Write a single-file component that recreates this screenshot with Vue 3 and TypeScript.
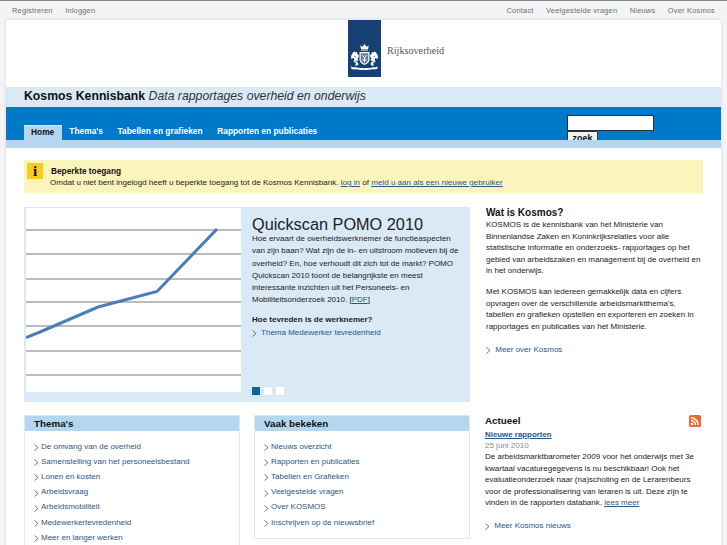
<script setup lang="ts">
const topLeft: string[] = ["Registreren", "Inloggen"];
const topRight: string[] = ["Contact", "Veelgestelde vragen", "Nieuws", "Over Kosmos"];
const tabs: string[] = ["Thema's", "Tabellen en grafieken", "Rapporten en publicaties"];
const themas: string[] = [
  "De omvang van de overheid",
  "Samenstelling van het personeelsbestand",
  "Lonen en kosten",
  "Arbeidsvraag",
  "Arbeidsmobiliteit",
  "Medewerkertevredenheid",
  "Meer en langer werken",
];
const vaak: string[] = [
  "Nieuws overzicht",
  "Rapporten en publicaties",
  "Tabellen en Grafieken",
  "Veelgestelde vragen",
  "Over KOSMOS",
  "Inschrijven op de nieuwsbrief",
];
const gridLines: number[] = [22, 46, 71, 94, 118, 143, 167];
</script>

<template>
  <div class="page">
    <div class="topbar">
      <div class="topbar__group">
        <a v-for="l in topLeft" :key="l">{{ l }}</a>
      </div>
      <div class="topbar__group">
        <a v-for="l in topRight" :key="l">{{ l }}</a>
      </div>
    </div>

    <div class="sheet">
      <div class="brand">
        <div class="brand__logo">
          <svg width="33" height="57" viewBox="0 0 33 57">
            <rect width="33" height="57" fill="#154273" />
            <g fill="#fff">
              <!-- kroon -->
              <path d="M13 29l-.8-3.500 2.300 1.200 2-2.700 2 2.700 2.300-1.200-.8 3.500z" />
              <rect x="13" y="29.600" width="7" height="1" />
              <!-- leeuwen -->
              <path d="M3 36l2-3.500 1.500-1 1 1 1.500-.5.500 2 1.500 1.500-.5 2-1 .5.800 2-1.300 1.500 1.500 2.500-1 1.500H7l1-2-2.500-2 1-2-1-1.500L5 38l-1.500 1.200z" />
              <path d="M30 36l-2-3.500-1.500-1-1 1-1.500-.5-.5 2L22 35.500l.5 2 1 .5-.8 2 1.300 1.500-1.500 2.500 1 1.500H26l-1-2 2.500-2-1-2 1-1.500L28 38l1.500 1.200z" />
              <!-- schild -->
              <path d="M11.500 32h10v7.500c0 2.800-2.500 4.500-5 5.500-2.500-1-5-2.700-5-5.500z" />
              <!-- lint -->
              <path d="M3 46.500c2 .8 3.500 1 5 .8 5 1.200 12 1.200 17 0 1.500.2 3 0 5-.8l-1 2.500c-1.500.5-3 .5-4.500.3-4.500 1-12 1-16.500 0-1.500.2-3 .2-4.500-.3z" />
            </g>
            <path d="M12.700 33.200h7.600v6.300c0 2-1.800 3.300-3.800 4.200-2-.9-3.800-2.200-3.800-4.200z" fill="#5f7fa3" />
            <path d="M14.500 35l2 3 2-3M16.500 38v4M14.500 40h4" stroke="#fff" stroke-width="1" fill="none" />
            <path d="M6 36l1.500 1M27 36l-1.500 1M7 42l2-1M26 42l-2-1" stroke="#154273" stroke-width=".7" fill="none" />
          </svg>
        </div>
        <span class="brand__name">Rijksoverheid</span>
      </div>

      <div class="title">
        <strong>Kosmos Kennisbank</strong> <em>Data rapportages overheid en onderwijs</em>
      </div>

      <nav class="nav">
        <div class="nav__tabs">
          <a class="nav__tab nav__tab--active">Home</a>
          <a v-for="t in tabs" :key="t" class="nav__tab">{{ t }}</a>
        </div>
        <form class="search">
          <input class="search__input" type="text" />
          <button class="search__button" type="button">zoek</button>
        </form>
      </nav>
      <div class="subnav"></div>

      <div class="content">
        <div class="notice">
          <span class="notice__icon">i</span>
          <div>
            <h4>Beperkte toegang</h4>
            <p>
              Omdat u niet bent ingelogd heeft u beperkte toegang tot de Kosmos Kennisbank.
              <a>log in</a> of <a>meld u aan als een nieuwe gebruiker</a>
            </p>
          </div>
        </div>

        <div class="row row--hero">
          <section class="hero">
            <svg class="hero__chart" width="215" height="184" viewBox="0 0 215 184">
              <rect width="215" height="184" fill="#fff" />
              <line
                v-for="y in gridLines"
                :key="y"
                x1="0"
                x2="215"
                :y1="y"
                :y2="y"
                stroke="#a6a6a6"
                stroke-width="1.300"
              />
              <polyline
                points="0,129.500 14,124 72,99 131,83.500 191,21"
                fill="none"
                stroke="#4a7ebb"
                stroke-width="3"
              />
            </svg>
            <div class="hero__body">
              <h2>Quickscan POMO 2010</h2>
              <p>
                Hoe ervaart de overheidswerknemer de functieaspecten<br />
                van zijn baan? Wat zijn de in- en uitstroom motieven bij de<br />
                overheid? En, hoe verhoudt dit zich tot de markt? POMO<br />
                Quickscan 2010 toont de belangrijkste en meest<br />
                interessante inzichten uit het Personeels- en<br />
                Mobiliteitsonderzoek 2010. [<a>PDF</a>]
              </p>
              <h5>Hoe tevreden is de werknemer?</h5>
              <a class="more">
                <svg class="chev" width="5" height="7" viewBox="0 0 5 7"><path d="M.5.500l3.500 3-3.500 3" /></svg>
                Thema Medewerker tevredenheid
              </a>
              <div class="dots">
                <span class="dot dot--on"></span>
                <span class="dot"></span>
                <span class="dot"></span>
              </div>
            </div>
          </section>

          <aside class="about">
            <h3>Wat is Kosmos?</h3>
            <p>
              KOSMOS is de kennisbank van het Ministerie van<br />
              Binnenlandse Zaken en Koninkrijksrelaties voor alle<br />
              statistische informatie en onderzoeks- rapportages op het<br />
              gebied van arbeidszaken en management bij de overheid en<br />
              in het onderwijs.
            </p>
            <p>
              Met KOSMOS kan iedereen gemakkelijk data en cijfers<br />
              opvragen over de verschillende arbeidsmarktthema's,<br />
              tabellen en grafieken opstellen en exporteren en zoeken in<br />
              rapportages en publicaties van het Ministerie.
            </p>
            <a class="more">
              <svg class="chev" width="5" height="7" viewBox="0 0 5 7"><path d="M.5.500l3.500 3-3.500 3" /></svg>
              Meer over Kosmos
            </a>
          </aside>
        </div>

        <div class="row">
          <section class="box">
            <h3 class="box__head">Thema's</h3>
            <ul class="box__list">
              <li v-for="t in themas" :key="t">
                <svg class="chev" width="5" height="7" viewBox="0 0 5 7"><path d="M.5.500l3.500 3-3.500 3" /></svg>
                <a>{{ t }}</a>
              </li>
            </ul>
          </section>
          <section class="box">
            <h3 class="box__head">Vaak bekeken</h3>
            <ul class="box__list">
              <li v-for="t in vaak" :key="t">
                <svg class="chev" width="5" height="7" viewBox="0 0 5 7"><path d="M.5.500l3.500 3-3.500 3" /></svg>
                <a>{{ t }}</a>
              </li>
            </ul>
          </section>
          <aside class="news">
            <div class="news__head">
              <h3>Actueel</h3>
              <svg width="12" height="12" viewBox="0 0 12 12">
                <rect width="12" height="12" rx="1.500" fill="#f26b2e" />
                <circle cx="3" cy="9" r="1.300" fill="#fff" />
                <path d="M2 5.500a4.500 4.500 0 0 1 4.500 4.500M2 2.800a7.200 7.200 0 0 1 7.200 7.200" fill="none" stroke="#fff" stroke-width="1.500" />
              </svg>
            </div>
            <a class="news__title">Nieuwe rapporten</a>
            <div class="news__date">25 juni 2010</div>
            <p>
              De arbeidsmarktbarometer 2009 voor het onderwijs met 3e<br />
              kwartaal vacaturegegevens is nu beschikbaar! Ook het<br />
              evaluatieonderzoek naar (na)scholing en de Lerarenbeurs<br />
              voor de professionalisering van leraren is uit. Deze zijn te<br />
              vinden in de rapporten databank. <a>lees meer</a>
            </p>
            <a class="more">
              <svg class="chev" width="5" height="7" viewBox="0 0 5 7"><path d="M.5.500l3.500 3-3.500 3" /></svg>
              Meer Kosmos nieuws
            </a>
          </aside>
        </div>
      </div>
    </div>
  </div>
</template>

<style>
html,
body {
  margin: 0;
  overflow: hidden;
}
</style>

<style scoped>
.page {
  height: 545px;
  overflow: hidden;
  box-sizing: border-box;
  padding: 0 6px;
  background: #f3f4f6;
  border-top: 1px solid #8a8a8a;
  font-family: "Liberation Sans", Arial, sans-serif;
  font-size: 8px;
  color: #222;
}

h2,
h3,
h4,
h5,
p,
ul {
  margin: 0;
  padding: 0;
}

a {
  color: #2b5687;
}

p a {
  text-decoration: underline;
}

.topbar {
  height: 19px;
  display: flex;
  justify-content: space-between;
  align-items: center;
  padding: 0 6px;
  font-size: 7.400px;
  letter-spacing: 0.220px;
}

.topbar__group {
  display: flex;
  gap: 12.500px;
}

.topbar a {
  color: #6d6d6d;
}

.sheet {
  height: 560px;
  background: #fff;
  border-radius: 2px 2px 0 0;
  box-shadow: 0 0 3px #c9cbd0;
}

.brand {
  height: 67px;
  display: flex;
  justify-content: center;
  padding-left: 65px;
  gap: 6px;
  box-sizing: border-box;
}

.brand__logo {
  height: 57px;
}

.brand__name {
  font-family: "Liberation Serif", serif;
  font-size: 10.200px;
  color: #555;
  margin-top: 25px;
}

.title {
  height: 20px;
  line-height: 19px;
  padding-left: 18px;
  background: #d9e9f6;
  font-size: 12.250px;
  color: #111;
}

.title em {
  color: #333;
}

.nav {
  position: relative;
  height: 33px;
  overflow: hidden;
  background: #0079c8;
  display: flex;
  align-items: flex-end;
  padding-left: 18px;
}

.nav__tabs {
  display: flex;
}

.nav__tab {
  height: 15px;
  line-height: 13px;
  padding: 0 7.300px;
  color: #fff;
  font-weight: bold;
  font-size: 8.400px;
}

.nav__tab--active {
  background: #b4d6ee;
  color: #111;
  border-top: 1px solid #d9e9f6;
  box-sizing: border-box;
  width: 38px;
  padding: 0 7px;
}

.search {
  position: absolute;
  left: 561px;
  top: 8px;
  display: flex;
  flex-direction: column;
  align-items: flex-start;
}

.search__input {
  width: 87px;
  height: 16px;
  box-sizing: border-box;
  border: 1px solid #234;
  padding: 0;
  background: #fff;
}

.search__button {
  width: 31px;
  height: 14px;
  padding: 0;
  box-sizing: border-box;
  border: 1px solid #333;
  border-radius: 1px;
  background: #f1f1f1;
  font-family: "Liberation Sans", sans-serif;
  font-size: 9px;
  font-weight: bold;
  color: #111;
}

.subnav {
  height: 8px;
  background: #b4d6ee;
}

.content {
  padding: 12px 18px 0;
}

.notice {
  height: 33px;
  width: 679px;
  margin-bottom: 14px;
  background: #fcf5bb;
  display: flex;
  gap: 8px;
  padding: 3px 0 0 3px;
  box-sizing: border-box;
}

.notice__icon {
  width: 16px;
  height: 16px;
  background: #fbcd1b;
  font-family: "Liberation Serif", serif;
  font-weight: bold;
  font-size: 15px;
  line-height: 16px;
  text-align: center;
  color: #111;
}

.notice h4 {
  font-size: 8.300px;
  line-height: 13px;
  margin-top: 2px;
  color: #111;
}

.notice p {
  line-height: 11px;
  margin-top: -1px;
  margin-left: -1px;
  font-size: 8.050px;
}

.row {
  display: flex;
  gap: 14px;
  align-items: flex-start;
}

.row--hero {
  gap: 16px;
  margin-bottom: 13px;
}

.hero {
  width: 446px;
  height: 195px;
  flex: none;
  display: flex;
  background: #d9e9f6;
  padding: 1px 0 0 1px;
  box-sizing: border-box;
}

.hero__chart {
  flex: none;
  margin-left: 1px;
}

.hero__body {
  position: relative;
  flex: 1;
  padding: 7px 0 0 11px;
  white-space: nowrap;
}

.hero__body h2 {
  font-size: 16.300px;
  font-weight: normal;
  line-height: 18px;
  color: #222;
}

.hero__body p {
  line-height: 12.300px;
}

.hero__body h5 {
  font-size: 8px;
  line-height: 12px;
  margin: 7px 0 1px;
  color: #222;
}

.dots {
  position: absolute;
  left: 11px;
  top: 179px;
  display: flex;
  gap: 4px;
}

.dot {
  width: 8px;
  height: 8px;
  background: #fff;
}

.dot--on {
  background: #01689b;
}

.more {
  display: block;
  line-height: 12px;
}

.chev {
  fill: none;
  stroke: #555;
  stroke-width: 0.800;
  margin-right: 2px;
  vertical-align: -2.500px;
}

.about {
  width: 218px;
  flex: none;
  white-space: nowrap;
}

.about h3 {
  font-size: 10px;
  line-height: 11px;
  margin-bottom: 1px;
  color: #111;
}

.about p {
  line-height: 11.500px;
  margin-bottom: 9.500px;
}

.about .more {
  margin-top: 11.500px;
}

.box {
  width: 216px;
  flex: none;
  box-sizing: border-box;
  border: 1px solid #d9e9f6;
  min-height: 124px;
}

.box__head {
  height: 15px;
  line-height: 15px;
  padding-left: 9px;
  background: #b4d6ee;
  font-size: 9.800px;
  color: #111;
}

.box__list {
  list-style: none;
  padding: 7.500px 0 8px 9px;
}

.box__list li {
  line-height: 15.200px;
}

.news {
  width: 218px;
  flex: none;
  margin-left: 1px;
  white-space: nowrap;
}

.news__head {
  display: flex;
  justify-content: space-between;
  height: 13px;
  align-items: flex-start;
  padding-right: 2px;
  margin-bottom: 1px;
}

.news h3 {
  font-size: 9.800px;
  line-height: 12px;
  color: #111;
}

.news__title {
  display: block;
  font-weight: bold;
  font-size: 7.900px;
  text-decoration: underline;
  line-height: 12px;
}

.news__date {
  color: #888;
  line-height: 10px;
}

.news p {
  line-height: 11.500px;
  margin-bottom: 11px;
}
</style>
